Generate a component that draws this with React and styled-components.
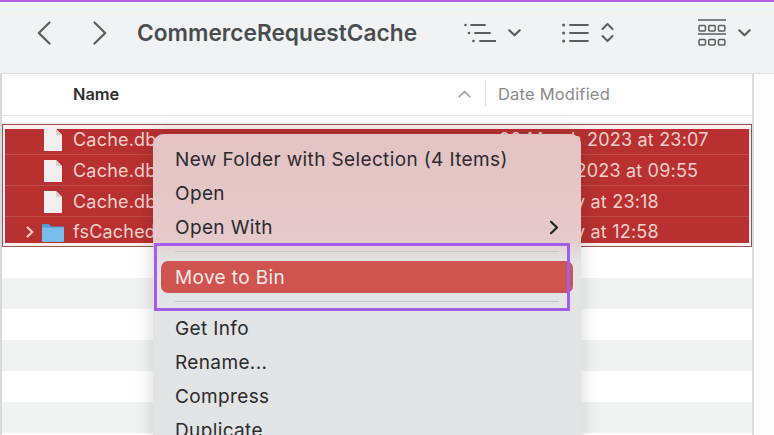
import React from 'react';
import styled, { createGlobalStyle } from 'styled-components';

const GlobalStyle = createGlobalStyle`
  html, body {
    margin: 0;
    padding: 0;
    background: #fdfdfd;
    font-family: Inter, "Liberation Sans", sans-serif;
  }
`;

const Page = styled.div`
  position: relative;
  width: 774px;
  height: 435px;
  overflow: hidden;
  display: flex;
  flex-direction: column;
`;

const AccentLine = styled.div`
  height: 2px;
  background: #b05fe0;
`;

const TopStrip = styled.div`
  height: 10px;
  background: #eff3f5;
  border-bottom: 2px solid #f5f2ea;
`;

const Toolbar = styled.div`
  height: 60px;
  display: flex;
  align-items: center;
  padding-left: 37px;
  padding-bottom: 22px;
  box-sizing: border-box;
  background: #f0f2f3;
  border-bottom: 1px solid #dcdddd;
  color: #5a5d5e;
`;

const ToolIcon = styled.svg`
  display: block;
  flex: none;
  margin-left: ${(p) => p.$gap || 0}px;
`;

const Title = styled.div`
  margin-left: 30px;
  width: 281px;
  flex: none;
  font-size: 22.7px;
  font-weight: 600;
  color: #4a4d4f;
  white-space: nowrap;
`;

const Body = styled.div`
  flex: 1;
  width: 754px;
  box-sizing: border-box;
  border-left: 2px solid #d8d9da;
  border-right: 2px solid #dadbdc;
  background: #fff;
  display: flex;
  flex-direction: column;
  min-height: 0;
`;

const HeaderRow = styled.div`
  height: 42px;
  flex: none;
  box-sizing: border-box;
  border-bottom: 1px solid #e4e5e5;
  display: flex;
  align-items: center;
  padding-left: 71px;
  padding-bottom: 2px;
`;

const NameHead = styled.div`
  width: 385px;
  flex: none;
  font-size: 16.4px;
  font-weight: 600;
  color: #2e2e2e;
`;

const HeadDivider = styled.div`
  width: 1px;
  height: 26px;
  margin-left: 14px;
  margin-right: 12px;
  background: #dedede;
`;

const DateHead = styled.div`
  font-size: 16.5px;
  letter-spacing: 0.2px;
  color: #8a8a8a;
`;

const Selection = styled.div`
  margin: 8px 0 0 0;
  border: 1px solid #9a5454;
  padding: 4px 2px 3px 2px;
  background: #fbeeee;
`;

const SelectedRow = styled.div`
  height: 30.75px;
  box-sizing: border-box;
  padding-top: 2px;
  display: flex;
  align-items: center;
  overflow: hidden;
  background: #b83130;
  color: #f5d0cb;
  font-size: 18px;
  letter-spacing: 0.2px;
  border-top: 1px solid #c04a48;

  &:first-child {
    height: 25px;
    padding-top: 0;
    padding-bottom: 4px;
    border-top: none;
  }

  &:last-child {
    height: 27px;
    padding-top: 4px;
  }
`;

const Disclosure = styled.div`
  width: 37px;
  flex: none;
  display: flex;
  justify-content: flex-end;
  padding-right: 8px;
  box-sizing: border-box;
`;

const ItemIcon = styled.svg`
  display: block;
  flex: none;
  margin-right: 9px;
`;

const RowName = styled.div`
  width: 426px;
  flex: none;
  white-space: nowrap;
`;

const RowDate = styled.div`
  white-space: nowrap;
`;

const Stripes = styled.div`
  flex: 1;
  display: flex;
  flex-direction: column;
`;

const Stripe = styled.div`
  height: 31px;
  flex: none;
  background: ${(p) => (p.$shade ? '#f1f3f3' : '#fff')};
`;

const Menu = styled.div`
  position: absolute;
  left: 153px;
  top: 134px;
  width: 428px;
  height: 320px;
  box-sizing: border-box;
  padding: 8px 8px 0;
  border-radius: 11px 11px 0 0;
  background: linear-gradient(180deg, #e3c3c4 0, #e6c9ca 105px, #e4d8d9 116px, #e2e4e6 130px, #e1e3e5 100%);
  box-shadow: 0 0 20px rgba(0, 0, 0, 0.16);
  display: flex;
  flex-direction: column;
`;

const MenuItem = styled.div`
  height: 34px;
  flex: none;
  box-sizing: border-box;
  padding: 0 14px;
  display: flex;
  align-items: center;
  justify-content: space-between;
  font-size: 19px;
  letter-spacing: 0.37px;
  color: #2b2b2d;
  white-space: nowrap;
`;

const ActiveItem = styled(MenuItem)`
  height: 32px;
  border-radius: 7px;
  background: #cf5450;
  color: #fbeae6;
`;

const MenuSep = styled.div`
  height: 1px;
  flex: none;
  margin: ${(p) => p.$space};
  background: #c4c8c4;
`;

const Callout = styled.div`
  position: absolute;
  left: 154px;
  top: 243px;
  width: 416px;
  height: 68px;
  box-sizing: border-box;
  border: 3px solid #a35cf0;
  pointer-events: none;
`;

const SortUp = styled.svg`
  display: block;
  flex: none;
`;

const Back = () => (
  <ToolIcon width="14" height="24" viewBox="0 0 14 24" fill="none" stroke="currentColor" strokeWidth="2.2" strokeLinecap="round" strokeLinejoin="round">
    <path d="M12.5 1.5 1.8 12l10.7 10.5" />
  </ToolIcon>
);

const Forward = () => (
  <ToolIcon $gap={42} width="14" height="24" viewBox="0 0 14 24" fill="none" stroke="currentColor" strokeWidth="2.2" strokeLinecap="round" strokeLinejoin="round">
    <path d="M1.5 1.5 12.2 12 1.5 22.5" />
  </ToolIcon>
);

const SmallChevron = ({ gap }) => (
  <ToolIcon $gap={gap} width="13" height="8" viewBox="0 0 13 8" fill="none" stroke="currentColor" strokeWidth="2.2" strokeLinecap="round" strokeLinejoin="round">
    <path d="M1.3 1.3 6.5 6.3l5.2-5" />
  </ToolIcon>
);

const GroupIcon = () => (
  <ToolIcon $gap={46} width="32" height="20" viewBox="0 0 32 20" fill="none" stroke="currentColor" strokeWidth="1.8" strokeLinecap="round">
    <path d="M7 2h14M11 10h15M16 18h16" />
    <circle cx="1.5" cy="2" r="1.3" fill="currentColor" stroke="none" />
    <circle cx="5" cy="10" r="1.3" fill="currentColor" stroke="none" />
    <circle cx="9.5" cy="18" r="1.3" fill="currentColor" stroke="none" />
  </ToolIcon>
);

const ListIcon = () => (
  <ToolIcon $gap={41} width="27" height="20" viewBox="0 0 27 20" fill="none" stroke="currentColor" strokeWidth="1.8" strokeLinecap="round">
    <path d="M8 2h18M8 10h18M8 18h18" />
    <circle cx="1.6" cy="2" r="1.5" fill="currentColor" stroke="none" />
    <circle cx="1.6" cy="10" r="1.5" fill="currentColor" stroke="none" />
    <circle cx="1.6" cy="18" r="1.5" fill="currentColor" stroke="none" />
  </ToolIcon>
);

const SortChevrons = () => (
  <ToolIcon $gap={12} width="13" height="21" viewBox="0 0 13 21" fill="none" stroke="currentColor" strokeWidth="2" strokeLinecap="round" strokeLinejoin="round">
    <path d="M1.5 7 6.5 2l5 5M1.5 14l5 5 5-5" />
  </ToolIcon>
);

const GalleryIcon = () => (
  <ToolIcon $gap={84} width="28" height="27" viewBox="0 0 28 27" fill="none" stroke="currentColor" strokeWidth="1.5">
    <path d="M0 1h28M0 15h28" />
    <rect x="1" y="6.5" width="6.5" height="5.5" rx="1.2" />
    <rect x="10.7" y="6.5" width="6.5" height="5.5" rx="1.2" />
    <rect x="20.4" y="6.5" width="6.5" height="5.5" rx="1.2" />
    <rect x="1" y="20.5" width="6.5" height="5.5" rx="1.2" />
    <rect x="10.7" y="20.5" width="6.5" height="5.5" rx="1.2" />
    <rect x="20.4" y="20.5" width="6.5" height="5.5" rx="1.2" />
  </ToolIcon>
);

const FileIcon = () => (
  <ItemIcon width="22" height="22" viewBox="0 0 22 22">
    <path d="M2 0h12l6 6v16H2z" fill="#f4eeee" />
    <path d="M14 0l6 6h-6z" fill="#d9cfcf" />
  </ItemIcon>
);

const FolderIcon = () => (
  <ItemIcon width="22" height="20" viewBox="0 0 22 20">
    <path d="M0 3a1 1 0 0 1 1-1h6l2 2.5h12a1 1 0 0 1 1 1V6H0z" fill="#4d9fdc" />
    <path d="M0 5.5h22V19a1 1 0 0 1-1 1H1a1 1 0 0 1-1-1z" fill="#79bdec" />
  </ItemIcon>
);

const rows = [
  { name: 'Cache.db', date: '20 March 2023 at 23:07' },
  { name: 'Cache.db', date: '2 March 2023 at 09:55' },
  { name: 'Cache.db', date: 'Yesterday at 23:18' },
  { name: 'fsCachedData', date: 'Yesterday at 12:58', folder: true },
];

export default function App() {
  return (
    <Page>
      <GlobalStyle />
      <AccentLine />
      <TopStrip />
      <Toolbar>
        <Back />
        <Forward />
        <Title>CommerceRequestCache</Title>
        <GroupIcon />
        <SmallChevron gap={12} />
        <ListIcon />
        <SortChevrons />
        <GalleryIcon />
        <SmallChevron gap={12} />
      </Toolbar>
      <Body>
        <HeaderRow>
          <NameHead>Name</NameHead>
          <SortUp width="13" height="8" viewBox="0 0 13 8" fill="none" stroke="#9b9b9b" strokeWidth="1.6" strokeLinecap="round" strokeLinejoin="round">
            <path d="M1.2 6.8 6.5 1.6l5.3 5.2" />
          </SortUp>
          <HeadDivider />
          <DateHead>Date Modified</DateHead>
        </HeaderRow>
        <Selection>
          {rows.map((row) => (
            <SelectedRow key={row.date}>
              <Disclosure>
                {row.folder && (
                  <svg width="8" height="12" viewBox="0 0 8 12" fill="none" stroke="#f5d0cb" strokeWidth="2" strokeLinecap="round" strokeLinejoin="round">
                    <path d="M1.5 1.5 6.3 6l-4.8 4.5" />
                  </svg>
                )}
              </Disclosure>
              {row.folder ? <FolderIcon /> : <FileIcon />}
              <RowName>{row.name}</RowName>
              <RowDate>{row.date}</RowDate>
            </SelectedRow>
          ))}
        </Selection>
        <Stripes>
          <Stripe />
          <Stripe $shade />
          <Stripe />
          <Stripe $shade />
          <Stripe />
          <Stripe $shade />
        </Stripes>
      </Body>
      <Menu>
        <MenuItem>New Folder with Selection (4 Items)</MenuItem>
        <MenuItem>Open</MenuItem>
        <MenuItem>
          Open With
          <svg width="10" height="15" viewBox="0 0 10 15" fill="none" stroke="#222" strokeWidth="2.2" strokeLinecap="round" strokeLinejoin="round">
            <path d="M2 1.8 8 7.5l-6 5.7" />
          </svg>
        </MenuItem>
        <MenuSep $space="7px 14px 9px" />
        <ActiveItem>Move to Bin</ActiveItem>
        <MenuSep $space="8px 14px 9px" />
        <MenuItem>Get Info</MenuItem>
        <MenuItem>Rename...</MenuItem>
        <MenuItem>Compress</MenuItem>
        <MenuItem>Duplicate</MenuItem>
      </Menu>
      <Callout />
    </Page>
  );
}
